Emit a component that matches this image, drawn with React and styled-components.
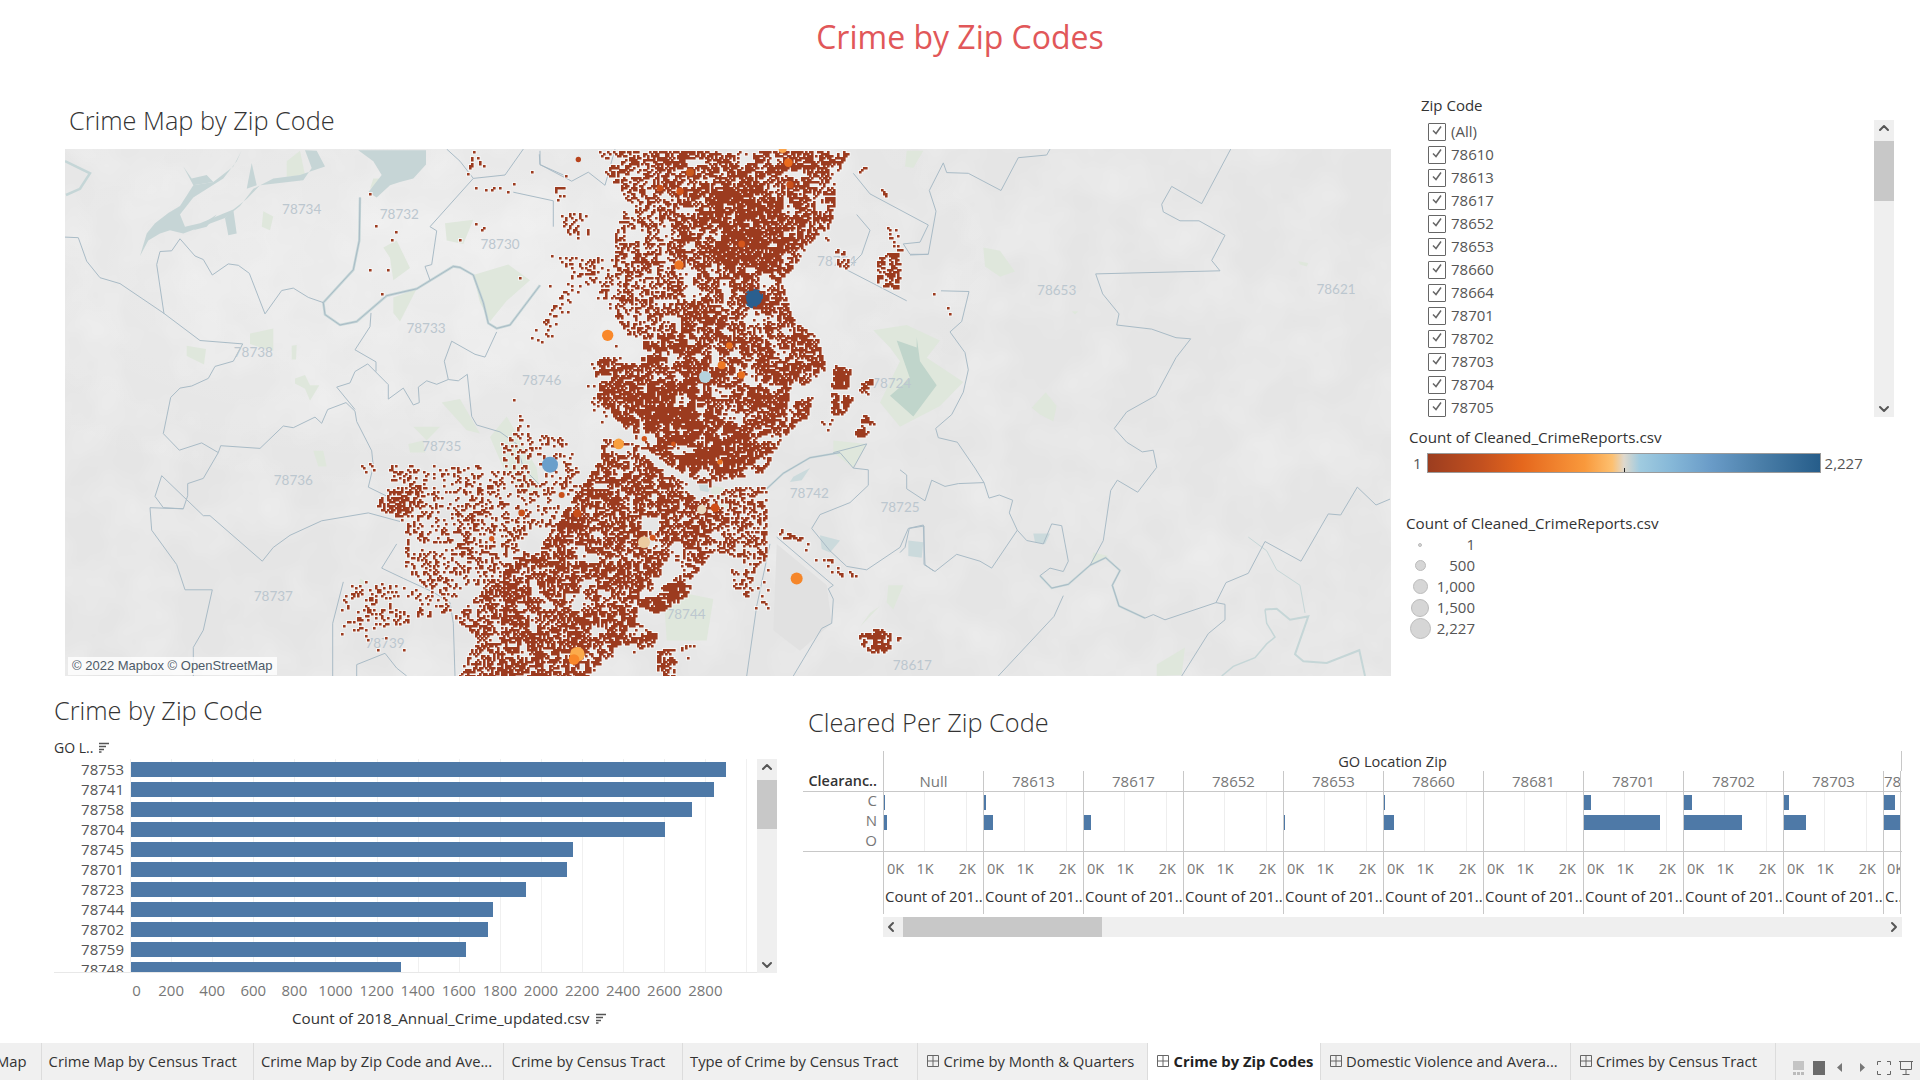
import React, { useMemo } from 'react'
import styled, { createGlobalStyle } from 'styled-components'
import { ChevronUp, ChevronDown, ChevronLeft, ChevronRight } from 'lucide-react'

const MAP_W = 1326
const MAP_H = 527
const FONT = `"Open Sans", "Noto Sans", sans-serif`

// ---------- map data, traced from the screenshot crops ----------
const Z10 = -1320
const Z11 = 1200

const pts = (s, off = 0) =>
  s.trim().split(/\s+/).map(p => {
    const [x, y] = p.split(',').map(Number)
    return [(x + off) / 3 + 435, y / 2.9 - 8.5]
  })
const toD = (list, close) => 'M' + list.map(p => p[0].toFixed(1) + ' ' + p[1].toFixed(1)).join('L') + (close ? 'Z' : '')

const BOUNDARIES = [
  ['15,280 55,282 80,350 120,398 180,415 310,500 420,580 548,590', Z10],
  ['360,285 335,320 300,322 290,360 312,503', Z10],
  ['360,285 405,335 430,345 457,390 505,358 535,362 568,385 615,503 665,435 700,428 745,455 790,470', Z10],
  ['900,165 898,290 880,375 790,470 795,505 840,535 890,525 980,450 1070,430 1180,365 1200,368 1240,390 1270,470 1285,530 1310,545 1350,535 1440,420', Z10],
  ['548,590 520,640 465,655 445,690 395,712 360,718 332,745 310,850 358,898 425,877 475,905 430,980 383,995 383,1030 370,1068 270,1065 275,1130 350,1230 375,1303 457,1303 430,1420 400,1470 400,1553', Z10],
  ['475,905 482,885 600,893 670,828 700,833 765,802 785,820 803,780 858,760 885,785 890,815 935,900 940,945 925,1005 1020,1050', Z10],
  ['305,972 285,1032 310,1065 370,1068', Z10],
  ['305,972 430,1088 450,1088 607,1220 640,1180 690,1145 785,1103 925,1080 1020,1105', Z10],
  ['830,715 870,703 885,670 923,648 985,708 985,750 1030,718 1060,767 1078,760 1075,715 1100,697 1130,707 1165,693 1195,697 1222,678 1235,800 1250,825 1320,845 1370,880 1390,950 1440,1000', Z10],
  ['830,715 885,780', Z10],
  ['933,500 930,540 885,607 948,642 948,670', Z10],
  ['1110,250 1130,262 1115,360 1095,365 1110,405', Z10],
  ['1160,25 1200,60 1240,110 1110,250', Z10],
  ['1240,110 1335,100 1390,25', Z10],
  ['1310,555 1275,628 1245,620 1175,582 1153,640 1165,693', Z10],
  ['1440,30 1440,70 1510,100', Z10],
  ['1360,150 1480,175 1480,250', Z10],
  ['890,1553 890,1520 975,1487 1010,1530 1040,1553', Z10],
  ['965,1240 1010,1170', Z10],
  ['818,1553 818,1400 850,1280', Z10],
  ['965,1240 1030,1270 1120,1310 1170,1340 1180,1400 1185,1553', Z10],
  ['130,65 140,93 205,95 303,145 355,50 440,42 450,25', Z11],
  ['130,65 88,145 108,205 85,330 30,332', Z11],
  ['992,25 905,183 815,133 785,185 790,207 840,233 897,233 975,275 935,348 960,378 587,387 608,445 657,503 650,535 755,547 828,572 872,575 828,630 767,740 680,787 643,835 680,875 727,903 760,898 770,948 713,1020 652,985 632,1015 610,1160 570,1232 617,1210 660,1247 637,1290 657,1350 735,1385 760,1375 795,1390 948,1340 975,1345 975,1390 925,1430 845,1553', Z11],
  ['948,1340 978,1282 1045,1255 1095,1163 1203,1220 1285,1083 1322,1086 1372,1005 1428,1057 1470,1040', Z11],
  ['150,555 195,615 205,665 190,730 155,795 107,835 115,862 172,875 225,950 252,992 267,1037 298,1028 338,1043 328,1080 352,1130 380,1160 430,1170 455,1112 485,1117 505,1220 490,1250 450,1240 420,1262 455,1298 505,1287 570,1232', Z11],
  ['150,555 185,525 207,438 123,436', Z11],
  ['0,955 20,970 20,1010 75,1045 95,985 135,1003 175,995 252,992', Z11],
  ['352,1130 275,1240 240,1220 170,1200 105,1250 72,1230 72,1118 28,1125 15,1180 0,1195', Z11],
  ['490,1320 462,1380 295,1553', Z11],
  ['118,40 120,70 215,118 265,92 315,130 345,25'],
  ['1060,95 1110,155 1285,245 1260,295 1210,300 1230,330 1285,330'],
  ['1070,215 1110,260 1085,330 1040,375 1220,465'],
  ['800,1010 850,965 930,920 1020,905 1060,950 1105,955 1105,1000 1050,1050 960,1085 935,1125 990,1190 1040,1235 1100,1245 1200,1180 1225,1125 1270,1115 1275,1230 1300,1248'],
  ['810,1170 770,1350 740,1553'],
  ['1000,1290 985,1300 1000,1330 995,1400 965,1415 880,1553'],
  ['1100,880 1060,950'],
  ['1100,880 1000,905'],
  ['830,1150 1000,1290'],
]

const RIVERS = [
  ['15,60 90,95 60,140 18,158', Z10, 2.5],
  ['900,165 898,290 880,375 790,470 795,505 840,535 890,525 980,450 1070,430 1180,365 1200,368 1240,390 1270,470 1285,530 1310,545 1350,535 1440,420', Z10, 2.5],
  ['1095,1360 1130,1358 1170,1390 1225,1380 1185,1490 1210,1510 1280,1515 1378,1478 1395,1553', Z11, 2],
  ['1095,1360 1100,1400 1125,1440 1100,1460 1065,1500 1000,1525 965,1553', Z11, 1.5],
  ['1045,1150 1100,1190 1130,1245 1200,1290 1215,1370', Z11, 1],
  ['420,1262 455,1298 505,1287 570,1232 617,1210 660,1247 637,1290 657,1350 735,1385', Z11, 2],
  ['800,1010 850,965 930,920 1020,905', 0, 2],
]

const LAKES = [
  ['895,28 1098,28 1098,70 1060,110 1020,120 990,130 950,165 925,150 965,100 940,60', Z10, '#c6d5d6'],
  ['545,28 520,75 460,120 400,130 360,190 325,210 285,240 260,270 240,335 265,290 300,270 330,260 370,270 495,225 540,190 580,140 640,110 720,100 795,75 770,30 735,28 755,80 730,115 600,130 560,170 520,200 420,240 375,250 360,215 400,165 490,110 530,60', Z10, '#c6d5d6'],
  ['400,130 370,75 395,110 440,100 460,120', Z10, '#c6d5d6'],
  ['560,140 575,65 590,130', Z10, '#c6d5d6'],
  ['520,200 530,270 505,275 495,225', Z10, '#c6d5d6'],
  ['470,215 440,250 400,260', Z10, '#c6d5d6'],
  ['1190,580 1250,600 1250,570 1260,640 1310,710 1240,800 1170,740 1230,690', 0, '#c0d5cb'],
  ['960,1145 1020,1160 990,1195 965,1185', 0, '#cbdadc'],
  ['1225,1160 1270,1165 1265,1210 1225,1205', 0, '#cbdadc'],
  ['880,975 930,950 905,985 870,990', 0, '#cbdadc'],
  ['595,990 640,985 625,1020 600,1015', 0, '#cbdadc'],
  ['400,1140 450,1140 435,1170 405,1165', Z11, '#cbdadc'],
]

const PARKS = [
  '380,595 438,605 432,650 380,625', '695,595 710,593 708,635 695,635',
  '705,690 735,680 750,710 778,710 750,755 735,720 705,705', '570,560 640,545 640,610 600,600 570,590',
  '760,900 790,900 800,945 775,945', '1000,455 1070,430 1020,525 1000,500',
  '1240,390 1345,360 1410,405 1340,465 1290,525 1260,470', '1155,240 1240,230 1210,300 1160,290',
  '970,310 1010,290 1050,370 1000,405 990,340', '1145,760 1200,750 1260,850 1220,840',
  '1060,830 1140,830 1100,870', '1045,880 1090,870 1095,905 1050,905',
  '1290,860 1340,800 1430,950 1440,1020 1400,1030 1330,950', '610,205 640,220 630,260 605,250',
  '680,60 720,30 735,100 680,105', '940,110 970,110 930,140', '900,1270 920,1280 895,1300',
].map(s => [s, Z10]).concat([
  ['250,310 300,320 345,380 300,395 255,365', Z11], ['395,775 437,730 470,770 460,815 420,795', Z11],
  ['1195,350 1225,355 1220,365 1200,360', Z11], ['515,495 535,495 525,505', Z11],
  ['580,1195 625,1205 575,1230', Z11],
  ['770,1520 855,1470 845,1550 770,1553', Z11],
  ['1220,30 1270,30 1240,80 1215,75', 0], ['630,1000 740,1020 680,1070 640,1050', 0],
  ['490,1300 640,1330 620,1450 500,1450', 0], ['1165,1290 1210,1290 1180,1360 1160,1340', 0],
  ['1110,1370 1140,1350 1080,1410', 0],
  ['1120,550 1220,535 1320,580 1280,630 1390,700 1320,770 1200,830 1140,760 1200,640 1170,600', 0],
  ['1000,870 1100,880 1060,950 1000,905', 0],
])

const ZIP_LABELS = [
  ['78734', 725, 198, Z10], ['78732', 1018, 212, Z10], ['78730', 1320, 300, Z10], ['78733', 1098, 543, Z10],
  ['78738', 580, 612, Z10], ['78746', 1445, 695, Z10], ['78735', 1145, 885, Z10], ['78736', 700, 985, Z10],
  ['78737', 640, 1322, Z10], ['78739', 975, 1458, Z10], ['78653', 470, 433, Z11], ['78621', 1308, 432, Z11],
  ['78724', 1175, 703, 0], ['78742', 928, 1022, 0], ['78725', 1200, 1062, 0], ['78744', 558, 1374, 0],
  ['78617', 1237, 1522, 0], ['78754', 1010, 350, 0],
]

// [polygon, density, frame offset]
const CRIME_AREAS = [
  ['295,25 560,25 620,200 520,400 340,400 340,280 380,170 310,90', .78],
  ['340,280 520,280 520,600 420,620 340,500', .78],
  ['270,640 430,590 440,900 310,760', .82],
  ['300,860 420,880 530,960 640,985 650,1010 530,990 400,900 300,920', .86],
  ['440,25 1050,25 1010,90 1000,180 990,295 950,270 900,330 880,370 840,400 880,520 950,570 975,660 905,710 860,640 700,500 500,560 500,400 540,250 470,150', .88],
  ['660,120 780,110 870,180 860,330 740,400 640,360 620,250', .95],
  ['410,600 560,520 760,500 880,530 950,600 960,650 870,700 860,760 935,740 920,800 840,860 790,960 640,985 530,960 420,880 370,830 300,760 270,710 300,670 360,640', .9],
  ['430,700 600,680 640,800 720,800 680,960 540,960 440,860', .96],
  ['300,920 400,900 530,990 650,1095 590,1170 530,1230 440,1260 400,1400 470,1430 450,1470 320,1500 250,1560 0,1560 0,1260 150,1130 200,1060 250,990', .88],
  ['530,1050 640,1095 650,1180 560,1280 420,1270 440,1240', .82],
  ['600,1030 680,1020 690,1200 620,1180', .74],
  ['420,1270 570,1285 560,1320 470,1370 400,1340', .96],
  ['350,1350 470,1440 400,1470 340,1420', .92],
  ['470,1470 530,1470 520,1560 470,1560', .84],
  ['540,1450 580,1460 570,1500 545,1500', .6],
  ['650,1000 800,1000 800,1200 760,1240 680,1200', .76],
  ['690,1240 760,1240 750,1330 700,1300', .74],
  ['760,1240 800,1200 810,1360 760,1360', .42],
  ['810,1080 860,1135 1060,1240 1070,1270 1010,1265 880,1170 810,1130', .42],
  ['860,1135 905,1150 890,1160 855,1150', .9],
  ['1010,1235 1060,1245 1070,1270 1020,1265', .8],
  ['1075,1430 1130,1410 1200,1440 1170,1470 1130,1490 1080,1470', .93],
  ['1130,340 1190,310 1205,370 1190,430 1130,415', .82],
  ['1160,250 1190,250 1205,320 1170,300', .64],
  ['1140,130 1170,130 1150,170', .6],
  ['1000,310 1050,320 1040,380 1010,360', .78],
  ['1000,650 1050,660 1040,720 990,720', .95],
  ['990,730 1060,740 1030,790 990,795', .95],
  ['1080,700 1125,685 1100,735 1075,730', .93],
  ['1090,790 1125,820 1085,860 1060,850', .93],
  ['960,800 1010,810 990,880 950,870', .42],
  ['160,130 190,130 195,180 160,170', .55],
  ['180,210 260,210 270,300 190,260', .68],
  ['85,570 180,450 230,350 270,370 200,500 130,600', .55],
  ['150,330 350,340 340,500 270,420', .6],
  ['270,730 330,800 320,850 250,760', .4],
  ['960,520 1120,500 1290,440 1350,440 1300,450 1130,510 990,525', .3],
  ['1340,460 1360,460 1365,530 1340,510', .6],
  ['1060,80 1100,60 1090,100', .5],
  ['0,880 60,815 200,870 250,980 160,1120 60,1130 0,1100', .58],
  ['30,720 50,810 30,800', .36],
  ['950,1040 1020,1000 1100,1000 1080,1060 1020,1090 960,1070', .84, Z10],
  ['990,940 1300,930 1430,1040 1500,1100 1500,1200 1380,1230 1280,1210 1170,1340 1030,1250 1020,1100 950,1060', .62, Z10],
  ['1190,1080 1500,1100 1500,1250 1270,1300 1180,1250', .7, Z10],
  ['830,1340 880,1270 1130,1300 1170,1360 1020,1400 840,1430', .58, Z10],
  ['900,1430 1050,1440 1050,1510 890,1470', .32, Z10],
  ['1180,1380 1270,1300 1500,1200 1500,1553 1190,1553 1250,1440', .82, Z10],
  ['1350,720 1400,830 1500,850 1500,930 1430,910 1380,820', .58, Z10],
  ['900,940 945,930 945,955 905,960', .66, Z10],
  ['1205,90 1240,25 1285,90 1250,105', .52, Z10],
  ['1240,120 1360,120 1360,150 1240,160', .36, Z10],
  ['1180,240 1270,230 1270,270 1190,320', .3, Z10],
].map(([s, d, off]) => ({ poly: pts(s, off || 0), d }))

const CRIME_GAPS = [
  '410,895 440,892 500,935 600,995 640,1005 590,1010 480,950',
  '505,610 535,615 510,660 495,650', '420,1090 480,1085 470,1130 420,1130',
  '100,1110 40,1180 100,1200 150,1130', '330,590 400,560 410,640 350,640',
  '710,790 730,790 725,825 710,825', '580,555 610,550 590,580',
].map(s => pts(s))

const BIG_MARKS = [
  [762, 458, 30, '#2a5f8f'], [150, 940, 24, '#6a9fcb'], [615, 686, 18, '#b5d3dd'], [323, 565, 17, '#f9882a'],
  [356, 880, 16, '#f9a03f'], [537, 361, 14, '#ee7624'], [890, 1270, 18, '#f5862a'], [232, 1490, 22, '#fbab4c'],
  [222, 1505, 16, '#f9882a'], [865, 64, 13, '#ea6c1e'], [848, 25, 12, '#f9a44d'], [570, 92, 12, '#c9581e'],
  [540, 147, 11, '#d4561c'], [870, 128, 11, '#c9501a'], [480, 138, 10, '#c9501a'], [688, 595, 10, '#e8701f'],
  [665, 652, 12, '#ee7a26'], [724, 680, 11, '#e8701f'], [605, 1070, 14, '#e9d8be'], [432, 1165, 18, '#edcba0'],
  [645, 1065, 13, '#cf4f18'], [458, 1152, 9, '#d4561c'], [65, 1080, 10, '#c9501a'], [185, 1028, 9, '#c9501a'],
  [232, 1082, 12, '#c9501a'], [660, 932, 8, '#e8701f'], [433, 865, 8, '#d4561c'], [725, 300, 10, '#d4561c'],
  [520, 880, 7, '#d4561c'], [235, 55, 8, '#b8431c'], [-25, 1155, 8, '#d4561c'],
]

// ---------- dot field ----------
const rng = seed => () => {
  seed |= 0; seed = seed + 0x6D2B79F5 | 0
  let t = Math.imul(seed ^ seed >>> 15, 1 | seed)
  t = t + Math.imul(t ^ t >>> 7, 61 | t) ^ t
  return ((t ^ t >>> 14) >>> 0) / 4294967296
}
const hash = (x, y) => {
  let h = Math.imul(x, 374761393) + Math.imul(y, 668265263) | 0
  h = Math.imul(h ^ h >>> 13, 1274126177)
  return ((h ^ h >>> 16) >>> 0) / 4294967296
}
const noise = (x, y, s) => {
  const gx = Math.floor(x / s), gy = Math.floor(y / s)
  let fx = x / s - gx, fy = y / s - gy
  fx = fx * fx * (3 - 2 * fx); fy = fy * fy * (3 - 2 * fy)
  const a = hash(gx, gy), b = hash(gx + 1, gy), c = hash(gx, gy + 1), d = hash(gx + 1, gy + 1)
  return (a + (b - a) * fx) * (1 - fy) + (c + (d - c) * fx) * fy
}
const inside = (poly, x, y) => {
  let c = false
  for (let i = 0, j = poly.length - 1; i < poly.length; j = i++) {
    const [xi, yi] = poly[i], [xj, yj] = poly[j]
    if ((yi > y) !== (yj > y) && x < (xj - xi) * (y - yi) / (yj - yi) + xi) c = !c
  }
  return c
}

function buildDots() {
  const rand = rng(2227)
  const areas = CRIME_AREAS.map(a => {
    const xs = a.poly.map(p => p[0]), ys = a.poly.map(p => p[1])
    return { ...a, x0: Math.min(...xs), x1: Math.max(...xs), y0: Math.min(...ys), y1: Math.max(...ys) }
  })
  const dot = (x, y) => `M${x} ${y}h2.6v2.6h-2.6z`
  let d = ''
  for (let y = 0; y < MAP_H; y += 2) {
    for (let x = 0; x < MAP_W; x += 2) {
      let best = 0
      for (const a of areas) {
        if (a.d > best && x >= a.x0 && x <= a.x1 && y >= a.y0 && y <= a.y1 && inside(a.poly, x, y)) best = a.d
      }
      if (!best) continue
      if (CRIME_GAPS.some(g => inside(g, x, y))) continue
      let p = best * best * best
      if (noise(x, y, 12) < .24) p *= .1
      if (noise(x + 300, y + 90, 5) < .24) p *= .25
      if (rand() < p) d += dot(x, y)
    }
  }
  // strays out in the suburbs
  for (let i = 0; i < 60; i++) {
    const x = 300 + Math.round(rand() * 130) * 2, y = 20 + Math.round(rand() * 110) * 2
    if (noise(x, y, 40) > .55) d += dot(x, y)
  }
  return d
}

// ---------- page data ----------
const ZIPS = ['(All)', '78610', '78613', '78617', '78652', '78653', '78660', '78664', '78701', '78702', '78703', '78704', '78705']
const SIZE_LEGEND = [['1', 4], ['500', 11], ['1,000', 15], ['1,500', 18], ['2,227', 21]]
const BARS = [['78753', 595], ['78741', 583], ['78758', 561], ['78704', 534], ['78745', 442], ['78701', 436], ['78723', 395], ['78744', 362], ['78702', 357], ['78759', 335], ['78748', 270]]
const AXIS = [0, 200, 400, 600, 800, 1000, 1200, 1400, 1600, 1800, 2000, 2200, 2400, 2600, 2800]
const PANELS = [
  { zip: 'Null', c: 1, n: 3 }, { zip: '78613', c: 2, n: 9 }, { zip: '78617', c: 0, n: 7 }, { zip: '78652', c: 0, n: 0 },
  { zip: '78653', c: 0, n: 1 }, { zip: '78660', c: 1, n: 10 }, { zip: '78681', c: 0, n: 0 }, { zip: '78701', c: 7, n: 76 },
  { zip: '78702', c: 8, n: 58 }, { zip: '78703', c: 5, n: 22 },
]
const TABS = [
  { label: 'Map', w: 41.6, end: true },
  { label: 'Crime Map by Census Tract', w: 212.4 },
  { label: 'Crime Map by Zip Code and Ave...', w: 250.5 },
  { label: 'Crime by Census Tract', w: 178.5 },
  { label: 'Type of Crime by Census Tract', w: 235.5 },
  { label: 'Crime by Month & Quarters', w: 230, grid: true },
  { label: 'Crime by Zip Codes', w: 172.6, grid: true, active: true },
  { label: 'Domestic Violence and Avera...', w: 250, grid: true },
  { label: 'Crimes by Census Tract', w: 205, grid: true },
]

// ---------- styles ----------
const Global = createGlobalStyle`
  html, body { margin: 0; padding: 0; background: #fff; }
  * { box-sizing: border-box; }
`
const Page = styled.div`
  width: 1920px;
  height: 1080px;
  overflow: hidden;
  display: flex;
  flex-direction: column;
  font-family: ${FONT};
  color: #555;
  font-size: 15px;
  background: #fff;
`
const TitleBar = styled.div`
  height: 90px;
  padding-top: 16px;
  text-align: center;
  font-size: 32px;
  line-height: 42px;
  font-weight: 500;
  color: #e15759;
`
const TopRow = styled.div`
  height: 585px;
  display: flex;
`
const MapColumn = styled.div`
  width: 1391px;
  padding: 10px 0 0 65px;
`
const SheetTitle = styled.div`
  height: ${p => p.$h || 32}px;
  line-height: ${p => p.$h || 32}px;
  padding-left: ${p => p.$left || 0}px;
  font-size: 25.3px;
  font-weight: 300;
  color: #333;
  white-space: nowrap;
`
const MapFrame = styled.div`
  position: relative;
  width: ${MAP_W}px;
  height: ${MAP_H}px;
  overflow: hidden;
  margin-top: 9px;
  svg { display: block; }
`
const Attribution = styled.div`
  position: absolute;
  left: 3px;
  bottom: 1px;
  padding: 1px 4px;
  background: rgba(255, 255, 255, .8);
  font: 13px/16px "Liberation Sans", Arial, sans-serif;
  color: #4d5a68;
`
const SidePanel = styled.div`
  flex: 1;
  padding-top: 5px;
`
const FilterTitle = styled.div`
  padding-left: 30px;
  height: 20px;
  line-height: 20px;
  font-size: 15px;
  color: #333;
`
const FilterBody = styled.div`
  display: flex;
  justify-content: space-between;
  width: 466px;
  height: 297px;
  margin: 5px 0 0 37px;
`
const ZipList = styled.div`
  display: flex;
  flex-direction: column;
`
const ZipRow = styled.div`
  display: flex;
  align-items: center;
  gap: 5px;
  height: 23px;
  line-height: 23px;
`
const CheckBox = styled.span`
  width: 18px;
  height: 18px;
  border: 1px solid #666;
  border-radius: 1px;
  display: flex;
  align-items: flex-start;
  justify-content: center;
`
const VScroll = styled.div`
  width: ${p => p.$w}px;
  height: ${p => p.$h}px;
  background: #efefef;
  display: flex;
  flex-direction: column;
  align-items: center;
  justify-content: space-between;
  color: #555;
  position: relative;
`
const ScrollThumb = styled.div`
  position: absolute;
  left: 0;
  right: 0;
  top: ${p => p.$top}px;
  height: ${p => p.$h}px;
  background: #c8c8c8;
`
const LegendTitle = styled.div`
  padding-left: ${p => p.$left}px;
  margin-top: ${p => p.$top}px;
  height: 20px;
  line-height: 20px;
  font-size: 15.2px;
  color: #333;
  white-space: nowrap;
`
const RampRow = styled.div`
  display: flex;
  align-items: center;
  height: 20px;
  margin: 6px 0 0 22px;
  line-height: 20px;
`
const Ramp = styled.div`
  position: relative;
  width: 394px;
  height: 20px;
  margin: 0 4px 0 5px;
  border: 1px solid #9b9b9b;
  background: linear-gradient(to right, #9c3d1f 0%, #c4511f 14%, #e5671d 24%, #f9993c 40%, #fdc070 47%, #dfd8cc 50%, #a0cbe0 54%, #86b8d8 62%, #6a9cc8 72%, #4a7ea8 85%, #265d8a 100%);
  &::after {
    content: '';
    position: absolute;
    left: 50%;
    bottom: 0;
    width: 1px;
    height: 4px;
    background: #222;
  }
`
const SizeList = styled.div`
  margin-top: 1px;
  padding-left: 15px;
`
const SizeRow = styled.div`
  display: flex;
  align-items: center;
  height: 21px;
  line-height: 21px;
`
const SizeSlot = styled.div`
  width: 28px;
  display: flex;
  justify-content: center;
`
const SizeDot = styled.span`
  width: ${p => p.$d}px;
  height: ${p => p.$d}px;
  border-radius: 50%;
  background: #d6d6d6;
  border: 1.5px solid #bcbcbc;
`
const SizeValue = styled.span`
  width: 41px;
  text-align: right;
`
const BottomRow = styled.div`
  height: 368px;
  display: flex;
`
const BarPanel = styled.div`
  width: 790px;
  padding: 19px 0 0 54px;
`
const HeaderLabel = styled.div`
  display: flex;
  align-items: center;
  gap: 5px;
  height: 22px;
  margin-top: 11px;
  padding-bottom: 2px;
  font-size: 14px;
  color: #333;
`
const BarBody = styled.div`
  display: flex;
  width: 723px;
`
const BarList = styled.div`
  width: 703px;
  height: 214px;
  overflow: hidden;
  padding-top: 3px;
  border-bottom: 1px solid #e8e8e8;
  background-image: repeating-linear-gradient(to right, #f0f0f0 0 1px, transparent 1px 41.1px);
  background-position: 76px 0;
  background-size: calc(100% - 76px) 100%;
  background-repeat: no-repeat;
`
const BarRow = styled.div`
  display: flex;
  align-items: flex-start;
  height: 20px;
`
const BarLabel = styled.span`
  width: 70px;
  margin-right: 7px;
  text-align: right;
  line-height: 15px;
`
const Bar = styled.div`
  height: 15px;
  background: #4e79a7;
`
const AxisRow = styled.div`
  display: flex;
  height: 20px;
  line-height: 20px;
  margin: 7px 0 0 55.5px;
`
const AxisTick = styled.span`
  width: 41.1px;
  padding-left: ${p => (p.$first ? 13 : 0)}px;
  text-align: center;
  color: #777;
  white-space: nowrap;
  display: flex;
  justify-content: center;
`
const AxisTitle = styled.div`
  display: flex;
  align-items: center;
  gap: 6px;
  height: 20px;
  margin: 8px 0 0 238px;
  font-size: 15.2px;
  color: #333;
  white-space: nowrap;
`
const ClearedPanel = styled.div`
  flex: 1;
  padding: 31px 0 0 13px;
`
const Table = styled.div`
  width: 1099px;
  margin-top: 13px;
`
const TableRow = styled.div`
  display: flex;
  height: ${p => p.$h}px;
  border-bottom: ${p => (p.$rule ? '1px solid #c8c8c8' : 'none')};
`
const RowHead = styled.div`
  width: 80px;
  flex: none;
  display: flex;
  flex-direction: column;
  align-items: flex-end;
  padding-right: 6px;
  margin-top: ${p => p.$lift || 0}px;
  font-weight: ${p => (p.$bold ? 600 : 400)};
  font-size: ${p => (p.$bold ? 14.4 : 15)}px;
  color: ${p => (p.$bold ? '#333' : '#777')};
  line-height: 20px;
  white-space: nowrap;
`
const SpanHead = styled.div`
  flex: 1;
  border-left: 1px solid #c8c8c8;
  border-right: 1px solid #c8c8c8;
  text-align: center;
  font-size: 14.6px;
  line-height: 20px;
  color: #333;
`
const Cell = styled.div`
  width: ${p => (p.$clip ? 18 : 100)}px;
  flex: none;
  border-left: 1px solid #c8c8c8;
  border-right: ${p => (p.$clip ? '1px solid #c8c8c8' : 'none')};
  overflow: hidden;
  white-space: nowrap;
  line-height: 20px;
  text-align: ${p => (p.$clip ? 'left' : 'center')};
  color: #777;
`
const BarCell = styled(Cell)`
  padding-top: 3px;
  background-image: linear-gradient(#eee, #eee), linear-gradient(#eee, #eee);
  background-size: 1px 100%, 1px 100%;
  background-position: 40px 0, 82px 0;
  background-repeat: no-repeat;
`
const MiniBar = styled.div`
  height: 15px;
  margin-bottom: 5px;
  background: #4e79a7;
`
const TickCell = styled(Cell)`
  display: flex;
  padding: 7px 0 0 3px;
  font-size: 14.5px;
`
const TickLabel = styled.span`
  width: ${p => p.$w}px;
  flex: none;
  text-align: ${p => p.$align || 'left'};
`
const CountCell = styled(Cell)`
  font-size: 15px;
  color: #333;
  text-align: left;
  padding: 0 0 0 1px;
`
const HScroll = styled.div`
  position: relative;
  width: 1019px;
  height: 20px;
  margin: 3px 0 0 80px;
  background: #efefef;
  display: flex;
  align-items: center;
  justify-content: space-between;
  color: #555;
`
const HThumb = styled.div`
  position: absolute;
  top: 0;
  bottom: 0;
  left: 20px;
  width: 199px;
  background: #c8c8c8;
`
const TabBar = styled.div`
  height: 37px;
  display: flex;
  background: #f0f0f0;
  font-size: 14.8px;
  color: #333;
`
const Tab = styled.div`
  width: ${p => p.$w}px;
  flex: none;
  display: flex;
  align-items: center;
  justify-content: ${p => (p.$end ? 'flex-end' : 'flex-start')};
  gap: 4px;
  padding: ${p => (p.$end ? '0 14px 1px 0' : p.$grid ? '0 0 1px 9px' : '0 0 1px 7px')};
  border-right: 1px solid #dcdcdc;
  background: ${p => (p.$active ? '#fff' : 'transparent')};
  font-weight: ${p => (p.$active ? 700 : 400)};
  color: ${p => (p.$active ? '#222' : '#333')};
  white-space: nowrap;
  overflow: hidden;
`
const TabTools = styled.div`
  flex: 1;
  display: flex;
  align-items: center;
  gap: 8px;
  padding: 12px 0 0 16px;
  overflow: hidden;
`

// ---------- small drawings ----------
const SortIcon = () => (
  <svg width="12" height="11" viewBox="0 0 12 11">
    <path d="M1 1.5h10M1 4.5h7M1 7.5h5M1 10h2.5" stroke="#555" strokeWidth="1.5" />
  </svg>
)
const CheckMark = () => (
  <svg width="14" height="14" viewBox="0 0 14 14">
    <path d="M3 6.5 L6 9.5 L11 2.5" fill="none" stroke="#666" strokeWidth="1.5" />
  </svg>
)
const GridIcon = () => (
  <svg width="12" height="12" viewBox="0 0 12 12" style={{ flex: 'none' }}>
    <path d="M.5.5h11v11H.5zM6 .5v11M.5 6h11" fill="none" stroke="#666" />
  </svg>
)
const Tools = () => (
  <>
    <svg width="13" height="14" viewBox="0 0 13 14"><path d="M1 0h11v9H1z" fill="#c4c4c4" /><path d="M1 11h3v3H1zM5 11h3v3H5zM9 11h3v3H9z" fill="#bbb" /></svg>
    <svg width="12" height="14" viewBox="0 0 12 14"><path d="M0 0h12v14H0z" fill="#6b6b6b" /></svg>
    <svg width="14" height="12" viewBox="0 0 14 12"><path d="M9 1v9L4 5.500z" fill="#777" /></svg>
    <svg width="14" height="12" viewBox="0 0 14 12"><path d="M5 1v9l5-4.500z" fill="#777" /></svg>
    <svg width="14" height="14" viewBox="0 0 14 14"><path d="M.5 4V.5H4M10 .5h3.500V4M13.500 10v3.500H10M4 13.500H.5V10" fill="none" stroke="#666" /></svg>
    <svg width="14" height="16" viewBox="0 0 14 16"><path d="M1.500 1.500h11v8h-11zM7 9.500v5M3.500 14.500h7M0 1.500h14" fill="none" stroke="#666" /></svg>
  </>
)

const Marks = ({ list }) => list.map(([x, y, r, fill]) => {
  const [p] = pts(`${x},${y}`)
  return <circle key={`${x}-${y}-${r}`} cx={p[0]} cy={p[1]} r={r / 3} fill={fill} />
})

function CrimeMap() {
  const dots = useMemo(buildDots, [])
  return (
    <svg width={MAP_W} height={MAP_H} viewBox={`0 0 ${MAP_W} ${MAP_H}`}>
      <defs>
        <filter id="mottle" x="0" y="0" width="100%" height="100%">
          <feTurbulence type="fractalNoise" baseFrequency="0.018" numOctaves="3" seed="7" />
          <feColorMatrix values="0 0 0 0 1  0 0 0 0 1  0 0 0 0 1  0 0 0 .5 -0.180" />
        </filter>
        <radialGradient id="glow" cx="28%" cy="22%" r="45%">
          <stop offset="0%" stopColor="#fff" stopOpacity=".3" />
          <stop offset="100%" stopColor="#fff" stopOpacity="0" />
        </radialGradient>
      </defs>
      <rect width={MAP_W} height={MAP_H} fill="#e5e5e5" />
      <rect width={MAP_W} height={MAP_H} filter="url(#mottle)" />
      <rect width={MAP_W} height={MAP_H} fill="url(#glow)" />
      <path d={toD(pts('830,1170 980,1290 995,1400 900,1480 820,1420'), true)} fill="#e1e1e1" />
      {PARKS.map(([s, off], i) => <path key={i} d={toD(pts(s, off), true)} fill="#dfe7dc" />)}
      {LAKES.map(([s, off, fill], i) => <path key={i} d={toD(pts(s, off), true)} fill={fill} />)}
      {RIVERS.map(([s, off, w], i) => <path key={i} d={toD(pts(s, off))} fill="none" stroke="#c5d6d7" strokeWidth={w} />)}
      {BOUNDARIES.map(([s, off], i) => <path key={i} d={toD(pts(s, off || 0))} fill="none" stroke="#a9bbc6" strokeWidth="1" />)}
      {ZIP_LABELS.map(([t, x, y, off]) => {
        const [p] = pts(`${x},${y}`, off)
        return <text key={t} x={p[0]} y={p[1] + 5} textAnchor="middle" fontFamily="Lato, sans-serif" fontSize="13.500" fill="#bcc7cf">{t}</text>
      })}
      <path d={dots} fill="#f6f6f6" stroke="#f6f6f6" strokeOpacity=".9" strokeWidth="2" />
      <Marks list={BIG_MARKS.filter(m => m[0] === 762)} />
      <path d={dots} fill="#9c3b1f" />
      <Marks list={BIG_MARKS.filter(m => m[0] !== 762)} />
      <Marks list={[[762, 458, 24, '#2a5f8f']]} />
    </svg>
  )
}

export default function App() {
  return (
    <Page>
      <Global />
      <TitleBar>Crime by Zip Codes</TitleBar>

      <TopRow>
        <MapColumn>
          <SheetTitle $h={40} $left={4}>Crime Map by Zip Code</SheetTitle>
          <MapFrame>
            <CrimeMap />
            <Attribution>© 2022 Mapbox © OpenStreetMap</Attribution>
          </MapFrame>
        </MapColumn>

        <SidePanel>
          <FilterTitle>Zip Code</FilterTitle>
          <FilterBody>
            <ZipList>
              {ZIPS.map(z => (
                <ZipRow key={z}>
                  <CheckBox><CheckMark /></CheckBox>
                  {z}
                </ZipRow>
              ))}
            </ZipList>
            <VScroll $w={20} $h={297}>
              <ScrollThumb $top={21} $h={60} />
              <ChevronUp size={16} strokeWidth={3} />
              <ChevronDown size={16} strokeWidth={3} />
            </VScroll>
          </FilterBody>

          <LegendTitle $left={18} $top={10}>Count of Cleaned_CrimeReports.csv</LegendTitle>
          <RampRow>
            1
            <Ramp />
            2,227
          </RampRow>

          <LegendTitle $left={15} $top={40}>Count of Cleaned_CrimeReports.csv</LegendTitle>
          <SizeList>
            {SIZE_LEGEND.map(([v, d]) => (
              <SizeRow key={v}>
                <SizeSlot><SizeDot $d={d} /></SizeSlot>
                <SizeValue>{v}</SizeValue>
              </SizeRow>
            ))}
          </SizeList>
        </SidePanel>
      </TopRow>

      <BottomRow>
        <BarPanel>
          <SheetTitle>Crime by Zip Code</SheetTitle>
          <HeaderLabel>GO L.. <SortIcon /></HeaderLabel>
          <BarBody>
            <BarList>
              {BARS.map(([zip, w]) => (
                <BarRow key={zip}>
                  <BarLabel>{zip}</BarLabel>
                  <Bar style={{ width: w }} />
                </BarRow>
              ))}
            </BarList>
            <VScroll $w={20} $h={214}>
              <ScrollThumb $top={21} $h={49} />
              <ChevronUp size={16} strokeWidth={3} />
              <ChevronDown size={16} strokeWidth={3} />
            </VScroll>
          </BarBody>
          <AxisRow>
            {AXIS.map((v, i) => <AxisTick key={v} $first={i === 0}>{v}</AxisTick>)}
          </AxisRow>
          <AxisTitle>Count of 2018_Annual_Crime_updated.csv <SortIcon /></AxisTitle>
        </BarPanel>

        <ClearedPanel>
          <SheetTitle $left={5}>Cleared Per Zip Code</SheetTitle>
          <Table>
            <TableRow $h={20}>
              <RowHead />
              <SpanHead>GO Location Zip</SpanHead>
            </TableRow>
            <TableRow $h={21} $rule>
              <RowHead $bold>Clearanc..</RowHead>
              {PANELS.map(p => <Cell key={p.zip}>{p.zip}</Cell>)}
              <Cell $clip>78704</Cell>
            </TableRow>
            <TableRow $h={60} $rule>
              <RowHead $lift={-2}>
                <span>C</span>
                <span>N</span>
                <span>O</span>
              </RowHead>
              {PANELS.map(p => (
                <BarCell key={p.zip}>
                  <MiniBar style={{ width: p.c, background: p.c ? undefined : 'transparent' }} />
                  <MiniBar style={{ width: p.n, background: p.n ? undefined : 'transparent' }} />
                </BarCell>
              ))}
              <BarCell $clip>
                <MiniBar style={{ width: 11 }} />
                <MiniBar />
              </BarCell>
            </TableRow>
            <TableRow $h={34}>
              <RowHead />
              {PANELS.map(p => (
                <TickCell key={p.zip}>
                  <TickLabel $w={23}>0K</TickLabel>
                  <TickLabel $w={30} $align="center">1K</TickLabel>
                  <TickLabel $w={36} $align="right">2K</TickLabel>
                </TickCell>
              ))}
              <TickCell $clip>0K</TickCell>
            </TableRow>
            <TableRow $h={28}>
              <RowHead />
              {PANELS.map(p => <CountCell key={p.zip}>Count of 201..</CountCell>)}
              <CountCell $clip>C..</CountCell>
            </TableRow>
          </Table>
          <HScroll>
            <HThumb />
            <ChevronLeft size={16} strokeWidth={3} />
            <ChevronRight size={16} strokeWidth={3} />
          </HScroll>
        </ClearedPanel>
      </BottomRow>

      <TabBar>
        {TABS.map(t => (
          <Tab key={t.label} $w={t.w} $end={t.end} $active={t.active} $grid={t.grid}>
            {t.grid && <GridIcon />}
            {t.label}
          </Tab>
        ))}
        <TabTools><Tools /></TabTools>
      </TabBar>
    </Page>
  )
}
